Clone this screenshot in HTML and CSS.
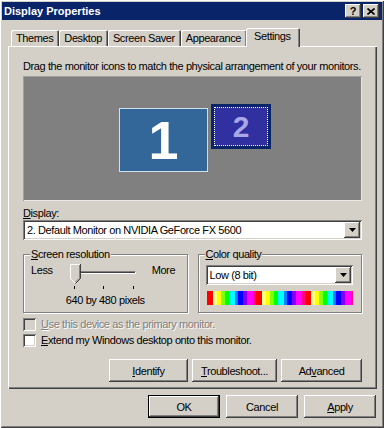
FILE: index.html
```html
<!DOCTYPE html>
<html lang="en">
<head>
    <meta charset="UTF-8">
    <title>Display Properties</title>
    <link rel="stylesheet" href="styles.css">
</head>
<body>
    <div class="window">
        <div class="titlebar">
            <span class="title">Display Properties</span>
            <div class="caption-buttons">
                <span class="cap-btn">?</span>
                <span class="cap-btn">
                    <svg width="8" height="7" viewBox="0 0 8 7"><path d="M0.5 0.5 L7.5 6.5 M7.5 0.5 L0.5 6.5" stroke="#000" stroke-width="1.6"/></svg>
                </span>
            </div>
        </div>

        <div class="client">
            <div class="tabs">
                <div class="tab">Themes</div>
                <div class="tab">Desktop</div>
                <div class="tab">Screen Saver</div>
                <div class="tab">Appearance</div>
                <div class="tab active">Settings</div>
            </div>

            <div class="panel">
                <p class="hint">Drag the monitor icons to match the physical arrangement of your monitors.</p>

                <div class="monitors">
                    <div class="monitor primary">1</div>
                    <div class="monitor secondary"><span class="focus">2</span></div>
                </div>

                <div class="field-label"><u>D</u>isplay:</div>
                <div class="combo">
                    <span class="combo-text">2. Default Monitor on NVIDIA GeForce FX 5600</span>
                    <span class="drop"><svg width="7" height="4" viewBox="0 0 7 4"><path d="M0 0 H7 L3.5 4 Z" fill="#000"/></svg></span>
                </div>

                <div class="groups">
                    <fieldset class="group">
                        <legend><u>S</u>creen resolution</legend>
                        <div class="slider-row">
                            <span>Less</span>
                            <div class="slider">
                                <div class="track"></div>
                                <svg class="thumb" width="11" height="20" viewBox="0 0 11 20">
                                    <path d="M0.5 0.5 H10.5 V14.5 L5.5 19.5 L0.5 14.5 Z" fill="#d4d0c8"/>
                                    <path d="M9.5 1 V14 L5.5 18" stroke="#808080" fill="none"/>
                                    <path d="M10.5 0 V14.5 L5.5 19.5" stroke="#404040" fill="none"/>
                                    <path d="M0.5 15 V0.5 H10" stroke="#fff" fill="none"/>
                                    <path d="M0.5 14.5 L5 19" stroke="#fff" fill="none"/>
                                </svg>
                                <div class="ticks">
                                    <span class="tick"></span>
                                    <span class="tick"></span>
                                    <span class="tick"></span>
                                </div>
                            </div>
                            <span>More</span>
                        </div>
                        <div class="res-value">640 by 480 pixels</div>
                    </fieldset>

                    <fieldset class="group">
                        <legend><u>C</u>olor quality</legend>
                        <div class="combo small">
                            <span class="combo-text">Low (8 bit)</span>
                            <span class="drop"><svg width="7" height="4" viewBox="0 0 7 4"><path d="M0 0 H7 L3.5 4 Z" fill="#000"/></svg></span>
                        </div>
                        <div class="spectrum"></div>
                    </fieldset>
                </div>

                <div class="check disabled">
                    <span class="box"></span>
                    <span><u>U</u>se this device as the primary monitor.</span>
                </div>
                <div class="check">
                    <span class="box"></span>
                    <span><u>E</u>xtend my Windows desktop onto this monitor.</span>
                </div>

                <div class="panel-buttons">
                    <button class="btn identify"><u>I</u>dentify</button>
                    <button class="btn troubleshoot"><u>T</u>roubleshoot...</button>
                    <button class="btn advanced">Ad<u>v</u>anced</button>
                </div>
            </div>

            <div class="dialog-buttons">
                <button class="btn default">OK</button>
                <button class="btn">Cancel</button>
                <button class="btn"><u>A</u>pply</button>
            </div>
        </div>
    </div>
</body>
</html>
```

FILE: styles.css
```css
body {
    margin: 0;
    font-family: "Liberation Sans", Arial, sans-serif;
    font-size: 11px;
    letter-spacing: -0.4px;
    color: #000;
    background: #d4d0c8;
}

.window {
    width: 384px;
    height: 428px;
    box-sizing: border-box;
    padding: 2px;
    background: #d4d0c8;
    box-shadow: inset 1px 1px #fff, inset -1px -1px #404040, inset 2px 2px #d4d0c8, inset -2px -2px #808080;
}

/* caption */
.titlebar {
    height: 18px;
    display: flex;
    align-items: center;
    justify-content: space-between;
    padding: 0 3px 0 2px;
    background: #0a246a;
    color: #fff;
}

.title {
    font-weight: bold;
    font-size: 11px;
    letter-spacing: 0;
}

.caption-buttons {
    display: flex;
    gap: 2px;
}

.cap-btn {
    width: 16px;
    height: 14px;
    box-sizing: border-box;
    display: flex;
    align-items: center;
    justify-content: center;
    background: #d4d0c8;
    color: #000;
    font-weight: bold;
    font-size: 11px;
    box-shadow: inset -1px -1px #404040, inset 1px 1px #fff, inset -2px -2px #808080;
}

/* body of the dialog */
.client {
    padding: 8px 5px 0 6px;
}

.tabs {
    display: flex;
    align-items: flex-end;
    height: 18px;
    padding-left: 3px;
}

.tab {
    height: 16px;
    line-height: 17px;
    padding: 0 6px 0 5px;
    background: #d4d0c8;
    box-shadow: inset 1px 1px #fff, inset -1px 0 #404040, inset -2px 0 #808080;
    border-radius: 2px 2px 0 0;
    white-space: nowrap;
}

.tab.active {
    height: 19px;
    line-height: 17px;
    margin: 0 0 -1px -1px;
    padding: 0 9px 0 8px;
    position: relative;
    z-index: 1;
}

.panel {
    height: 343px;
    box-sizing: border-box;
    padding: 14px 15px 0 15px;
    box-shadow: inset 1px 1px #fff, inset -1px -1px #404040, inset -2px -2px #808080;
}

.hint {
    margin: 0;
    line-height: 13px;
    white-space: nowrap;
}

.monitors {
    position: relative;
    height: 125px;
    margin-top: 3px;
    background: #808080;
    box-shadow: inset 1px 1px #a0a0a0, inset -1px -1px #e8e8e8;
}

.monitor {
    position: absolute;
    box-sizing: border-box;
    display: flex;
    align-items: center;
    justify-content: center;
    font-weight: bold;
    letter-spacing: 0;
}

.monitor.primary {
    left: 96px;
    top: 32px;
    width: 89px;
    height: 64px;
    background: #336699;
    border: 1px solid #cfe0f0;
    color: #fff;
    font-size: 54px;
}

.monitor.secondary {
    left: 188px;
    top: 28px;
    width: 60px;
    height: 45px;
    background: #0a246a;
    padding: 3px;
}

.monitor.secondary .focus {
    width: 100%;
    height: 100%;
    box-sizing: border-box;
    border: 1px dotted #fff;
    background: #3030a0;
    color: #a8a8e8;
    font-size: 30px;
    display: flex;
    align-items: center;
    justify-content: center;
}

.field-label {
    margin-top: 6px;
    line-height: 13px;
}

.combo {
    height: 20px;
    box-sizing: border-box;
    display: flex;
    align-items: center;
    justify-content: space-between;
    padding: 2px;
    background: #fff;
    box-shadow: inset 1px 1px #808080, inset -1px -1px #fff, inset 2px 2px #404040, inset -2px -2px #d4d0c8;
}

.combo-text {
    padding-left: 2px;
}

.drop {
    width: 16px;
    height: 16px;
    box-sizing: border-box;
    display: flex;
    align-items: center;
    justify-content: center;
    background: #d4d0c8;
    box-shadow: inset -1px -1px #404040, inset 1px 1px #fff, inset -2px -2px #808080;
}

.groups {
    display: flex;
    gap: 10px;
    margin-top: 8px;
}

.group {
    flex: 1;
    height: 65px;
    box-sizing: border-box;
    margin: 0;
    padding: 3px 6px 0 6px;
    border: 1px solid #808080;
    box-shadow: inset 1px 1px #fff, 1px 1px #fff;
    min-width: 0;
}

.group legend {
    padding: 0 1px;
    line-height: 13px;
    background: #d4d0c8;
}

.slider-row {
    display: flex;
    height: 26px;
    line-height: 13px;
    padding-left: 1px;
}

.slider {
    position: relative;
    width: 70px;
    margin-left: 17px;
    margin-right: 12px;
}

.track {
    position: absolute;
    left: 4px;
    top: 7px;
    width: 62px;
    height: 3px;
    box-sizing: border-box;
    border-top: 1px solid #808080;
    border-left: 1px solid #808080;
    border-bottom: 1px solid #fff;
    border-right: 1px solid #fff;
    background: #404040;
}

.thumb {
    position: absolute;
    left: 0;
    top: 0;
}

.ticks {
    position: absolute;
    left: 4px;
    right: 6px;
    top: 22px;
    display: flex;
    justify-content: space-between;
}

.tick {
    width: 1px;
    height: 3px;
    background: #000;
}

.res-value {
    margin-top: 4px;
    text-align: center;
    line-height: 13px;
}

.combo.small {
    margin: 1px 2px 0 1px;
    height: 20px;
}

.spectrum {
    height: 14px;
    margin: 6px 2px 0 2px;
    background: repeating-linear-gradient(90deg,
        #ff0000 0, #ff0000 6px,
        #ffff80 6px, #ffff80 10px,
        #ffff00 10px, #ffff00 14px,
        #80ff00 14px, #80ff00 18px,
        #00ff00 18px, #00ff00 22px,
        #00ffff 22px, #00ffff 28px,
        #0080ff 28px, #0080ff 31px,
        #0000ff 31px, #0000ff 36px,
        #8000ff 36px, #8000ff 40px,
        #ff00ff 40px, #ff00ff 46px,
        #ff0080 46px, #ff0080 49px);
}

.check {
    display: flex;
    align-items: center;
    gap: 5px;
    height: 16px;
}

.check .box {
    width: 13px;
    height: 13px;
    box-sizing: border-box;
    background: #fff;
    box-shadow: inset 1px 1px #808080, inset -1px -1px #fff, inset 2px 2px #404040, inset -2px -2px #d4d0c8;
}

.check.disabled {
    margin-top: 3px;
    color: #808080;
    text-shadow: 1px 1px #fff;
}

.check.disabled .box {
    background: #d4d0c8;
}

.panel-buttons {
    display: flex;
    justify-content: flex-end;
    gap: 4px;
    margin-top: 11px;
}

.btn {
    height: 23px;
    box-sizing: border-box;
    border: none;
    padding: 0;
    margin: 0;
    font-family: inherit;
    font-size: 11px;
    letter-spacing: -0.4px;
    color: #000;
    background: #d4d0c8;
    box-shadow: inset -1px -1px #404040, inset 1px 1px #fff, inset -2px -2px #808080;
}

.btn.identify { width: 79px; }
.btn.troubleshoot { width: 85px; }
.btn.advanced { width: 81px; }

.dialog-buttons {
    display: flex;
    justify-content: flex-end;
    gap: 6px;
    margin-top: 6px;
    padding-right: 1px;
}

.dialog-buttons .btn {
    width: 72px;
}

.btn.default {
    box-shadow: inset 0 0 0 1px #000, inset -2px -2px #404040, inset 2px 2px #fff, inset -3px -3px #808080;
}
```
